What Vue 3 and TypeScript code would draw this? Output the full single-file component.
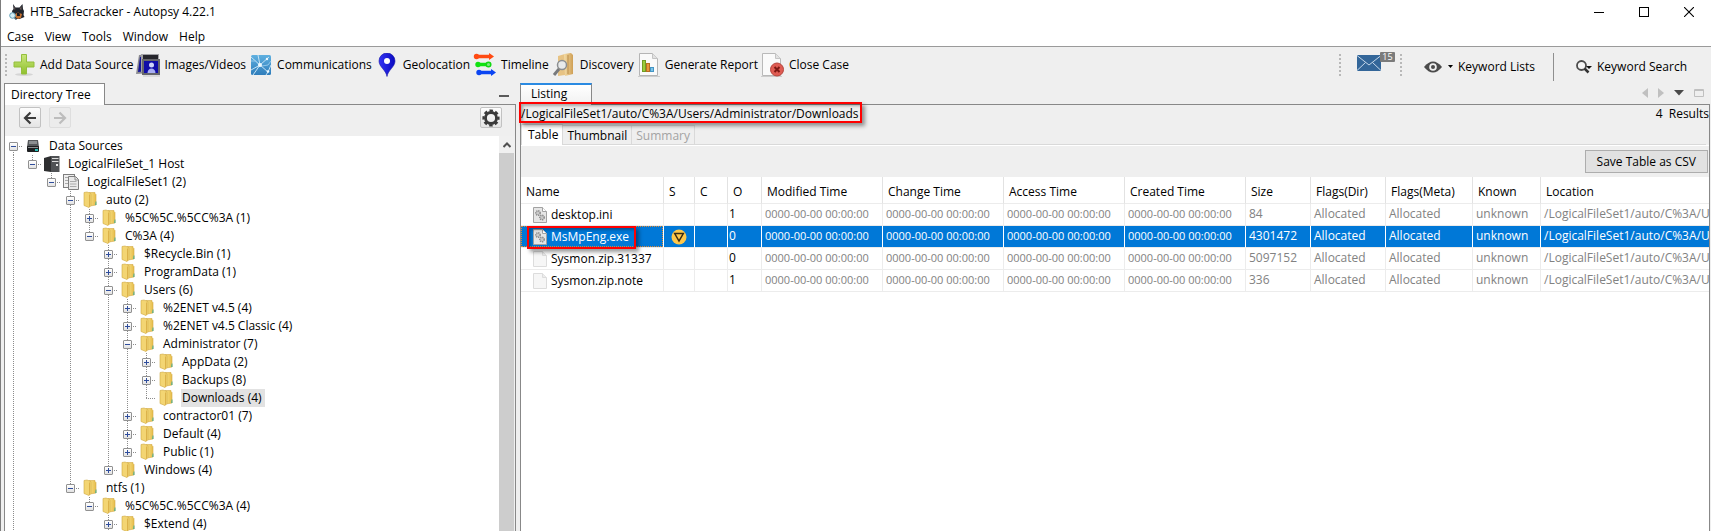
<script setup lang="ts">
type Kind = 'sources' | 'host' | 'set' | 'folder'
interface TreeNode {
  label: string
  depth: number
  state: 'open' | 'closed' | 'leaf'
  kind: Kind
  more?: boolean
  selected?: boolean
}

const node = (
  depth: number,
  label: string,
  state: TreeNode['state'] = 'closed',
  kind: Kind = 'folder',
  extra: Partial<TreeNode> = {},
): TreeNode => ({ depth, label, state, kind, ...extra })

const nodes: TreeNode[] = [
  node(0, 'Data Sources', 'open', 'sources', { more: true }),
  node(1, 'LogicalFileSet_1 Host', 'open', 'host'),
  node(2, 'LogicalFileSet1 (2)', 'open', 'set'),
  node(3, 'auto (2)', 'open'),
  node(4, '%5C%5C.%5CC%3A (1)'),
  node(4, 'C%3A (4)', 'open'),
  node(5, '$Recycle.Bin (1)'),
  node(5, 'ProgramData (1)'),
  node(5, 'Users (6)', 'open'),
  node(6, '%2ENET v4.5 (4)'),
  node(6, '%2ENET v4.5 Classic (4)'),
  node(6, 'Administrator (7)', 'open'),
  node(7, 'AppData (2)'),
  node(7, 'Backups (8)'),
  node(7, 'Downloads (4)', 'leaf', 'folder', { selected: true }),
  node(6, 'contractor01 (7)'),
  node(6, 'Default (4)'),
  node(6, 'Public (1)'),
  node(5, 'Windows (4)'),
  node(3, 'ntfs (1)', 'open'),
  node(4, '%5C%5C.%5CC%3A (4)', 'open'),
  node(5, '$Extend (4)', 'closed', 'folder', { more: true }),
]

function hasNext(index: number, level: number): boolean {
  for (let j = index + 1; j < nodes.length; j++) {
    if (nodes[j].depth < level) return false
    if (nodes[j].depth === level) return true
  }
  return level === 0
}

const rows = nodes.map((n, i) => ({
  ...n,
  guides: Array.from({ length: n.depth }, (_, level) => hasNext(i, level)),
  next: n.more || hasNext(i, n.depth),
}))

const menus = ['Case', 'View', 'Tools', 'Window', 'Help']

const columns = [
  { name: 'Name', cls: 'c-name' },
  { name: 'S', cls: 'c-s' },
  { name: 'C', cls: 'c-c' },
  { name: 'O', cls: 'c-o' },
  { name: 'Modified Time', cls: 'c-time' },
  { name: 'Change Time', cls: 'c-time' },
  { name: 'Access Time', cls: 'c-time' },
  { name: 'Created Time', cls: 'c-time' },
  { name: 'Size', cls: 'c-size' },
  { name: 'Flags(Dir)', cls: 'c-dir' },
  { name: 'Flags(Meta)', cls: 'c-meta' },
  { name: 'Known', cls: 'c-known' },
  { name: 'Location', cls: 'c-loc' },
]

const zero = '0000-00-00 00:00:00'
const folderPath = '/LogicalFileSet1/auto/C%3A/Users/Administrator/Downloads'
const files = [
  { name: 'desktop.ini', o: 1, size: 84, gear: true, selected: false },
  { name: 'MsMpEng.exe', o: 0, size: 4301472, gear: true, selected: true },
  { name: 'Sysmon.zip.31337', o: 0, size: 5097152, gear: false, selected: false },
  { name: 'Sysmon.zip.note', o: 1, size: 336, gear: false, selected: false },
]
</script>

<template>
  <div class="window">
    <svg class="defs" width="0" height="0" aria-hidden="true">
      <defs>
        <linearGradient id="gGreen" x1="0" y1="0" x2="0" y2="1"><stop offset="0" stop-color="#c9e67c" /><stop offset="1" stop-color="#8fc02c" /></linearGradient>
        <linearGradient id="gSky" x1="0" y1="0" x2="0" y2="1"><stop offset="0" stop-color="#5fb0e0" /><stop offset="1" stop-color="#2f7dbb" /></linearGradient>
        <linearGradient id="gPin" x1="0" y1="0" x2="1" y2="0"><stop offset="0" stop-color="#3434f4" /><stop offset="1" stop-color="#0a0ac0" /></linearGradient>
        <linearGradient id="gFold" x1="0" y1="0" x2="1" y2="0"><stop offset="0" stop-color="#f9e288" /><stop offset="1" stop-color="#e6bd4c" /></linearGradient>
        <linearGradient id="gTan" x1="0" y1="0" x2="1" y2="0"><stop offset="0" stop-color="#f4dca6" /><stop offset="1" stop-color="#cf9f55" /></linearGradient>
      </defs>
    </svg>

    <header class="titlebar">
      <svg class="applogo" width="16" height="16" viewBox="0 0 16 16" aria-hidden="true">
        <path d="M4 0l2.500 3.500h4L13.500 0l.5 5 1 2-.5 4 1 2-5 2H7L4 12l-1-5 1.500-2z" fill="#20242c" />
        <path d="M5 2l1.500 3L5.500 6zM12.500 2l-2 3 2 1z" fill="#6b5b58" />
        <path d="M6 10l3-1.500 4 1.500-1 4-3 1-3-2z" fill="#c5702f" />
        <path d="M8 9h2.500l.5 3H8z" fill="#1b1c22" />
        <circle cx="3.500" cy="11.500" r="2.800" fill="#d4eef6" stroke="#5f9db6" />
        <path d="M5.500 14l2 1.500" stroke="#48616e" stroke-width="1.500" />
      </svg>
      <h1>HTB_Safecracker - Autopsy 4.22.1</h1>
      <div class="wincontrols">
        <button type="button" aria-label="Minimize"><svg width="10" height="10"><path d="M0 5.500h10" stroke="#000" /></svg></button>
        <button type="button" aria-label="Maximize"><svg width="10" height="10"><rect x=".5" y=".5" width="9" height="9" fill="none" stroke="#000" /></svg></button>
        <button type="button" aria-label="Close"><svg width="10" height="10"><path d="M0 0l10 10M10 0L0 10" stroke="#000" stroke-width="1.100" /></svg></button>
      </div>
    </header>

    <nav class="menubar">
      <button v-for="m in menus" :key="m" type="button">{{ m }}</button>
    </nav>

    <div class="toolbar">
      <span class="grip"></span>
      <div class="tools">
        <button type="button" class="tool">
          <svg width="24" height="24" viewBox="0 0 24 24"><ellipse cx="12" cy="21.500" rx="9" ry="1.500" fill="#d5d5d5" /><path d="M9.500 1.500h5v7.500h7.500v5h-7.500v7h-5v-7H2V9h7.500z" fill="url(#gGreen)" stroke="#94bf3c" /></svg>
          <span>Add Data Source</span>
        </button>
        <button type="button" class="tool">
          <svg width="24" height="24" viewBox="0 0 24 24"><path d="M3 2l13-1-2 19-14 1z" fill="#8a8a8f" /><path d="M4 4l10-1-2 15-10 1z" fill="#14149a" /><path d="M5 1h18v3l-2 15H5z" fill="#a1a1a6" /><path d="M7 2h15v4H7z" fill="#26262c" /><rect x="6" y="6" width="18" height="16" fill="#66666b" /><rect x="8" y="8" width="14" height="12" fill="#100ca8" /><circle cx="15.500" cy="12" r="2.500" fill="#cfd4fa" /><path d="M11.500 20c0-6 8-6 8 0z" fill="#aab0f2" /><path d="M7 23h17" stroke="#c6c6c6" /></svg>
          <span>Images/Videos</span>
        </button>
        <button type="button" class="tool">
          <svg width="24" height="24" viewBox="0 0 24 24"><rect x="2" y="2" width="20" height="20" rx="1.500" fill="url(#gSky)" /><path d="M2 4l9 8L9 2M11 12l9-8M11 12L4 22M11 12l8 7 3-7M2 17l9-5M19 19l-2 3" fill="none" stroke="#c4e2f5" /><path d="M2 8h5l3 4M13 13l6-1 3-4" fill="none" stroke="#93c8ea" /><circle cx="11" cy="12" r="2" fill="#eef9ff" /><circle cx="19" cy="18.500" r="1.300" fill="#eef9ff" /><circle cx="18" cy="6" r="1.200" fill="#eef9ff" /></svg>
          <span>Communications</span>
        </button>
        <button type="button" class="tool">
          <svg width="24" height="24" viewBox="0 0 24 24"><path d="M12 23.500C11 17 4 14 4 8a8 8 0 0 1 16 0c0 6-7 9-8 15.500z" fill="url(#gPin)" stroke="#1616a8" stroke-width=".6" /><circle cx="12" cy="8" r="3" fill="#fff" /></svg>
          <span>Geolocation</span>
        </button>
        <button type="button" class="tool">
          <svg width="24" height="24" viewBox="0 0 24 24"><g stroke-width="3.500"><path d="M3 3.500h15" stroke="#ff4a12" /><path d="M5 11.500h10" stroke="#12e212" /><path d="M6 19.500h14" stroke="#0b45f2" /></g><circle cx="3.500" cy="3.500" r="2.700" fill="#ff4a12" /><path d="M16 0l5 3.500L16 7z" fill="#ff4a12" /><circle cx="5" cy="11.500" r="2.700" fill="#12e212" /><circle cx="15.500" cy="11.500" r="2.300" fill="#7fe87f" stroke="#12d812" stroke-width="1.500" /><circle cx="6" cy="19.500" r="2.700" fill="#0b45f2" /><path d="M18 16l5 3.500-5 3.500z" fill="#0b45f2" /></svg>
          <span>Timeline</span>
        </button>
        <button type="button" class="tool">
          <svg width="24" height="24" viewBox="0 0 24 24"><path d="M6 3l7-2v21l-7 1z" fill="#e7c384" /><path d="M12 1l7-1 2 2v19l-8 2z" fill="url(#gTan)" /><path d="M16 2v19" stroke="#b98b48" /><circle cx="10" cy="12" r="4.500" fill="#e8eaea" stroke="#8c8f92" stroke-width="1.500" /><path d="M7 16l-5 6" stroke="#77797c" stroke-width="3" /></svg>
          <span>Discovery</span>
        </button>
        <button type="button" class="tool">
          <svg width="24" height="24" viewBox="0 0 24 24"><path d="M1 23.500h22" stroke="#ccc" /><path d="M2.500.5h13l5 5v17h-18z" fill="#fafafa" stroke="#b5b5b5" /><path d="M15.500.5v5h5" fill="#e2e2e2" stroke="#c4c4c4" /><rect x="5.500" y="7.500" width="3" height="11" fill="#9ccb3a" stroke="#719b26" /><rect x="9.500" y="10.500" width="3" height="8" fill="#e8963c" stroke="#b86d20" /><rect x="13.500" y="14.500" width="3" height="4" fill="#7cc4ea" stroke="#4595c4" /></svg>
          <span>Generate Report</span>
        </button>
        <button type="button" class="tool">
          <svg width="24" height="24" viewBox="0 0 24 24"><path d="M0 23.500h21" stroke="#ccc" /><path d="M1.500.5h13l5 5v17h-18z" fill="#fafafa" stroke="#b9b9b9" /><path d="M14.500.5v5h5" fill="#e2e2e2" stroke="#c4c4c4" /><circle cx="16" cy="16.500" r="6.500" fill="#df5b52" stroke="#b5443c" /><path d="M13.500 14l5 5M18.500 14l-5 5" stroke="#7c1712" stroke-width="2" /></svg>
          <span>Close Case</span>
        </button>
      </div>

      <div class="right">
        <span class="grip"></span>
        <button type="button" class="mail" aria-label="Messages">
          <svg width="24" height="16" viewBox="0 0 24 16"><path d="M0 0h24v16H0z" fill="#336699" /><path d="M0 .5l12 9.500L24 .5M0 15.500l8.500-8M24 15.500l-8.500-8" fill="none" stroke="#c4d6e8" stroke-width="1" /></svg>
          <span class="badge">15</span>
        </button>
        <span class="grip"></span>
        <button type="button" class="kw lists">
          <svg width="18" height="12" viewBox="0 0 18 12"><path d="M0 6Q9-5 18 6Q9 17 0 6z" fill="#4b4b4b" /><circle cx="9" cy="6" r="3.800" fill="#f0f0f0" /><circle cx="9" cy="6" r="2" fill="#4b4b4b" /></svg>
          <svg class="caret" width="5" height="3"><path d="M0 0h5L2.500 3z" fill="#000" /></svg>
          <span>Keyword Lists</span>
        </button>
        <span class="divider"></span>
        <button type="button" class="kw search">
          <svg width="16" height="14" viewBox="0 0 16 14"><circle cx="5.500" cy="5.500" r="4.500" fill="#f4f4f4" stroke="#4b4b4b" stroke-width="1.800" /><path d="M8.500 8.500l4 4" stroke="#333" stroke-width="2.500" /><path d="M10 6h6l-3 3z" fill="#111" /></svg>
          <span>Keyword Search</span>
        </button>
      </div>
    </div>

    <main class="workspace">
      <section class="pane explorer">
        <div class="tabstrip">
          <button type="button" class="tab dirtab">Directory Tree</button>
          <button type="button" class="minbtn" aria-label="Minimize panel"></button>
        </div>
        <div class="body">
          <div class="treebar">
            <button type="button" class="sq" aria-label="Back"><svg width="14" height="14" viewBox="0 0 14 14"><path d="M13 7H3M7.500 1.500L2 7l5.500 5.500" fill="none" stroke="#3c3c3c" stroke-width="2.200" /></svg></button>
            <button type="button" class="sq off" aria-label="Forward" disabled><svg width="14" height="14" viewBox="0 0 14 14"><path d="M1 7h10M6.500 1.500L12 7l-5.500 5.500" fill="none" stroke="#bdbdbd" stroke-width="2.200" /></svg></button>
            <button type="button" class="sq gearbtn" aria-label="Options"><svg width="18" height="18" viewBox="0 0 18 18"><circle cx="9" cy="9" r="5.500" fill="none" stroke="#3a3a3a" stroke-width="2.800" /><circle cx="9" cy="9" r="7.400" fill="none" stroke="#3a3a3a" stroke-width="2.400" stroke-dasharray="3.400 2.412" stroke-dashoffset="1.700" /></svg></button>
          </div>
          <div class="treearea">
            <ul class="tree">
              <li v-for="(r, i) in rows" :key="i">
                <span v-for="(g, k) in r.guides" :key="k" class="guide" :class="{ through: g }"></span>
                <span class="guide own" :class="{ through: r.next && i > 0, half: !r.next, root: i === 0 }">
                  <button v-if="r.state !== 'leaf'" type="button" class="exp" :class="r.state" :aria-label="r.state === 'open' ? 'Collapse' : 'Expand'"></button>
                </span>
                <svg v-if="r.kind === 'folder'" width="18" height="18" viewBox="0 0 18 18"><path d="M8 1.500h6v1l1 1V14l-6 1z" fill="url(#gFold)" stroke="#d3aa45" stroke-width=".6" /><path d="M3 1.500l3-.5 4 1.500v12L8 16.500 3 14.500z" fill="#f3d573" stroke="#cfa741" stroke-width=".6" /><path d="M9 3v12.500L8 16.500V4z" fill="#dcb24a" /><path d="M14.500 10.500h1V14h-1.500z" fill="#61b08a" /></svg>
                <svg v-else-if="r.kind === 'sources'" width="18" height="18" viewBox="0 0 18 18"><path d="M4 3h10l1 7H3z" fill="#55585b" /><path d="M5 4h8v3H5z" fill="#8b8f92" /><rect x="3" y="9" width="12" height="6" rx="1" fill="#1e2022" /><path d="M4 10.500h10" stroke="#8b8f92" /><rect x="11" y="12" width="3" height="2" fill="#29c3bb" /></svg>
                <svg v-else-if="r.kind === 'host'" width="18" height="18" viewBox="0 0 18 18"><path d="M1 3l7-2v16l-7-1z" fill="#2e2f31" /><path d="M8 1h8.500v16H8z" fill="#505255" /><path d="M9 3.500h6.500M9 6.500h6.500" stroke="#dcdcdc" /><rect x="13" y="9" width="2" height="2" fill="#e8e8e8" /></svg>
                <svg v-else width="18" height="18" viewBox="0 0 18 18"><rect x="1.500" y="1.500" width="11" height="13" fill="#efefef" stroke="#7e7e7e" /><path d="M6.500 3.500h7l3 3v10h-10z" fill="#e9e9e9" stroke="#7e7e7e" /><path d="M3 4.500h3M3 7.500h3M3 10.500h3M8 8.500h6.500M8 11h6.500M8 13.500h6.500" stroke="#aaa" /><path d="M13 4v3h3" fill="none" stroke="#8e8e8e" /></svg>
                <span class="label" :class="{ sel: r.selected }">{{ r.label }}</span>
              </li>
            </ul>
            <div class="scroll">
              <button type="button" aria-label="Scroll up"><svg width="8" height="6"><path d="M.5 5L4 1.500 7.500 5" fill="none" stroke="#505050" stroke-width="2" /></svg></button>
              <div class="thumb"></div>
            </div>
          </div>
        </div>
      </section>

      <section class="pane viewer">
        <div class="tabstrip">
          <button type="button" class="tab listtab">Listing</button>
          <div class="nav">
            <button type="button" aria-label="Previous tab"><svg width="6" height="10"><path d="M6 0v10L0 5z" fill="#c0c0c0" /></svg></button>
            <button type="button" aria-label="Next tab"><svg width="6" height="10"><path d="M0 0v10l6-5z" fill="#c0c0c0" /></svg></button>
            <button type="button" aria-label="Tab list"><svg width="10" height="6"><path d="M0 0h10L5 5.500z" fill="#4a4a4a" /></svg></button>
            <button type="button" aria-label="Maximize panel"><svg width="10" height="8"><path d="M.5.5h9v7h-9zM0 1.500h10" fill="none" stroke="#c0c0c0" /></svg></button>
          </div>
        </div>
        <div class="body">
          <div class="pathrow">
            <span class="path">{{ folderPath }}<i class="mark"></i></span>
            <span class="count">4&nbsp; Results</span>
          </div>
          <div class="subtabs">
            <button type="button" class="active">Table</button>
            <button type="button">Thumbnail</button>
            <button type="button" disabled>Summary</button>
          </div>
          <div class="actions"><button type="button">Save Table as CSV</button></div>
          <div class="tablearea">
            <table>
              <thead>
                <tr><th v-for="c in columns" :key="c.name" scope="col" :class="c.cls">{{ c.name }}</th></tr>
              </thead>
              <tbody>
                <tr v-for="f in files" :key="f.name" :class="{ chosen: f.selected }">
                  <td class="namecell">
                    <div class="file">
                      <svg width="14" height="16" viewBox="0 0 14 16"><path d="M.5.5h9l4 4v11H.5z" :fill="f.gear ? '#e6e6e6' : '#f6f6f6'" :stroke="f.gear ? '#a2a2a2' : '#dcdcdc'" /><path d="M9.500.5v4h4" :fill="f.gear ? '#fff' : '#ececec'" :stroke="f.gear ? '#a2a2a2' : '#dcdcdc'" /><template v-if="f.gear"><circle cx="5" cy="6" r="2.200" fill="#c9c9c9" stroke="#8c8c8c" stroke-width="1.500" stroke-dasharray="1.200 .7" /><circle cx="9" cy="10.500" r="2.200" fill="#c9c9c9" stroke="#8c8c8c" stroke-width="1.500" stroke-dasharray="1.200 .7" /></template></svg>
                      <span>{{ f.name }}</span>
                      <i v-if="f.selected" class="mark"></i>
                    </div>
                  </td>
                  <td class="scorecell"><svg v-if="f.selected" width="16" height="16" viewBox="0 0 16 16"><circle cx="8" cy="8" r="7.500" fill="#ffc84a" /><path d="M3.700 4.500h8.600L8 12z" fill="none" stroke="#3a2c12" stroke-width="1.500" /></svg></td>
                  <td></td>
                  <td class="dark">{{ f.o }}</td>
                  <td v-for="n in 4" :key="n" class="stamp">{{ zero }}</td>
                  <td>{{ f.size }}</td>
                  <td>Allocated</td>
                  <td>Allocated</td>
                  <td>unknown</td>
                  <td>{{ folderPath }}/{{ f.name }}</td>
                </tr>
              </tbody>
            </table>
          </div>
        </div>
      </section>
    </main>
  </div>
</template>

<style>
body { margin: 0; }
</style>

<style scoped>
.window {
  box-sizing: border-box;
  height: 100vh;
  display: flex;
  flex-direction: column;
  overflow: hidden;
  background: #efefef;
  border-left: 1px solid #7c7c7c;
  font-family: "Open Sans", "Noto Sans", sans-serif;
  font-size: 12px;
  line-height: 18px;
  color: #000;
  white-space: nowrap;
}
.window * { box-sizing: border-box; }
.defs { position: absolute; }
button { font: inherit; color: inherit; background: none; border: 0; padding: 0; margin: 0; }
svg { display: block; flex: none; }

.titlebar { display: flex; align-items: center; height: 24px; padding-left: 8px; background: #fff; }
h1 { margin: 0 0 0 5px; font-size: 12px; font-weight: 400; line-height: 18px; }
.wincontrols { display: flex; margin-left: auto; }
.wincontrols button { width: 45px; height: 24px; display: grid; place-items: center; }

.menubar { display: flex; gap: 11px; height: 23px; padding: 4px 6px 0; background: #fff; border-bottom: 1px solid #9a9a9a; align-items: flex-start; }

.toolbar { display: flex; align-items: center; height: 36px; flex: none; padding-left: 4px; }
.grip { width: 2px; height: 22px; background: repeating-linear-gradient(#b8b8b8 0 2px, transparent 2px 4px); }
.tools { display: flex; gap: 3px; margin-left: 5px; }
.tool { display: flex; align-items: center; gap: 4px; }
.right { display: flex; align-items: center; height: 36px; margin-left: auto; padding-right: 24px; }
.mail { position: relative; margin: 0 19px 4px 16px; }
.badge { position: absolute; left: 23px; top: -3px; width: 15px; height: 10px; background: #7b7b7b; border-radius: 1px; color: #fff; font-size: 9px; line-height: 10px; text-align: center; }
.kw { display: flex; align-items: center; padding-top: 3px; }
.lists { margin-left: 22px; }
.lists .caret { margin: 0 5px 0 6px; }
.divider { width: 1px; height: 28px; margin: 4px 22px 0 18px; background: #8f8f8f; }
.search { gap: 5px; }

.workspace { flex: 1; display: flex; gap: 4px; min-height: 0; padding: 0 1px 0 3px; }
.pane { display: flex; flex-direction: column; min-height: 0; }
.explorer { width: 512px; flex: none; }
.viewer { flex: 1; min-width: 0; }
.tabstrip { display: flex; height: 21px; flex: none; position: relative; }
.tab { height: 22px; text-align: left; border: 1px solid #888; border-bottom: 0; background: #fff; position: relative; z-index: 1; }
.dirtab { width: 101px; padding-left: 6px; background: #fff; }
.listtab { width: 72px; padding: 0 0 2px 10px; border-top: 2px solid #2a8ae2; background: linear-gradient(#fff, #f1f1f1); }
.minbtn { width: 10px; height: 2px; margin: 12px 7px 0 auto; background: #5a5a5a; }
.nav { display: flex; align-items: center; gap: 10px; margin-left: auto; padding: 0 6px 2px 0; }
.body { flex: 1; display: flex; flex-direction: column; min-height: 0; border: 1px solid #888; border-bottom: 0; }

.treebar { display: flex; height: 31px; flex: none; padding: 2px 13px 0 14px; gap: 8px; }
.sq { width: 22px; height: 21px; display: grid; place-items: center; border: 1px solid #c2c2c2; border-radius: 2px; background: linear-gradient(#fdfdfd, #e4e4e4); }
.sq.off { border-color: #dedede; background: #ececec; }
.gearbtn { margin-left: auto; }
.treearea { flex: 1; display: flex; min-height: 0; background: #fff; }
.tree { flex: 1; margin: 0; padding: 1px 0 0; list-style: none; overflow: hidden; }
.tree li { display: flex; height: 18px; }
.guide { flex: none; width: 19px; position: relative; }
.through, .half, .root {
  background-image: repeating-linear-gradient(#8c8c8c 0 1px, transparent 1px 2px);
  background-repeat: no-repeat;
  background-size: 1px 100%;
  background-position: 8px 0;
}
.half { background-size: 1px 9px; }
.root { background-size: 1px 9px; background-position: 8px 9px; }
.own::after { content: ""; position: absolute; left: 8px; right: 1px; top: 9px; height: 1px; background: repeating-linear-gradient(90deg, #8c8c8c 0 1px, transparent 1px 2px); }
.exp {
  position: absolute; z-index: 1; left: 4px; top: 5px; width: 9px; height: 9px;
  border: 1px solid #919191; border-radius: 1px;
  background: linear-gradient(#2f4d9c, #2f4d9c) center / 5px 1px no-repeat, linear-gradient(#fff, #e2e2e2);
}
.exp.closed { background: linear-gradient(#2f4d9c, #2f4d9c) center / 5px 1px no-repeat, linear-gradient(#2f4d9c, #2f4d9c) center / 1px 5px no-repeat, linear-gradient(#fff, #e2e2e2); }
.label { padding: 0 3px 0 1px; margin-left: 6px; }
.label.sel { background: #e2e2e2; }
.scroll { width: 16px; flex: none; display: flex; flex-direction: column; background: #f0f0f0; padding-right: 1px; }
.scroll button { height: 17px; display: grid; place-items: center; }
.thumb { flex: 1; background: #cdcdcd; }

.pathrow { display: flex; justify-content: space-between; height: 19px; }
.path { position: relative; }
.mark { position: absolute; border: 2px solid #f00; box-shadow: 3px 3px 4px rgba(0, 0, 0, .4), inset 2px 2px 3px rgba(0, 0, 0, .3); }
.path .mark { left: -2px; right: -3px; top: -3px; height: 21px; z-index: 2; }
.subtabs { display: flex; align-items: flex-end; height: 21px; margin-right: 3px; border-bottom: 1px solid #d9d9d9; flex: none; }
.subtabs button { height: 19px; padding: 1px 4px 0; border: 1px solid #d9d9d9; border-left: 0; border-bottom: 0; }
.subtabs .active { height: 21px; margin-bottom: -1px; padding: 0 4px 1px 6px; background: #fff; border-left: 1px solid #d9d9d9; }
.subtabs button:disabled { color: #a3a3a3; }
.actions { display: flex; justify-content: flex-end; padding: 4px 1px 4px 0; border-top: 1px solid #fff; flex: none; }
.actions button { height: 23px; padding: 0 11px; border: 1px solid #adadad; background: #e1e1e1; line-height: 21px; }
.tablearea { flex: 1; background: #fff; overflow: hidden; min-height: 0; }
table { width: 100%; table-layout: fixed; border-collapse: separate; border-spacing: 0; }
th, td { padding: 0 0 0 3px; overflow: hidden; text-align: left; font-weight: 400; border-right: 1px solid #ececec; border-bottom: 1px solid #ececec; }
th:last-child, td:last-child { border-right: 0; }
th { height: 27px; padding: 3px 0 0 5px; border-right: 1px solid #e2e2e2; }
td { height: 22px; color: #828282; line-height: 20px; padding-bottom: 1px; }
.stamp { font-size: 11px; }
.c-name { width: 143px; }
.c-s { width: 31px; }
.c-c { width: 33px; }
.c-o { width: 34px; }
.c-time { width: 121px; }
.c-size { width: 65px; }
.c-dir { width: 75px; }
.c-meta { width: 87px; }
.c-known { width: 68px; }
.namecell { padding: 0; overflow: visible; color: #000; }
.dark { color: #000; padding-left: 1px; }
.file { position: relative; display: flex; align-items: center; gap: 4px; height: 21px; padding-left: 12px; }
.chosen td { background: #0078d7; color: #fff; border-right-color: #fff; }
.chosen .file { border: 1px dotted #d98a3c; padding-left: 11px; }
.file .mark { left: 5px; right: 26px; top: -1px; height: 23px; z-index: 2; }
.scorecell { padding: 0 0 0 7px; }
</style>
